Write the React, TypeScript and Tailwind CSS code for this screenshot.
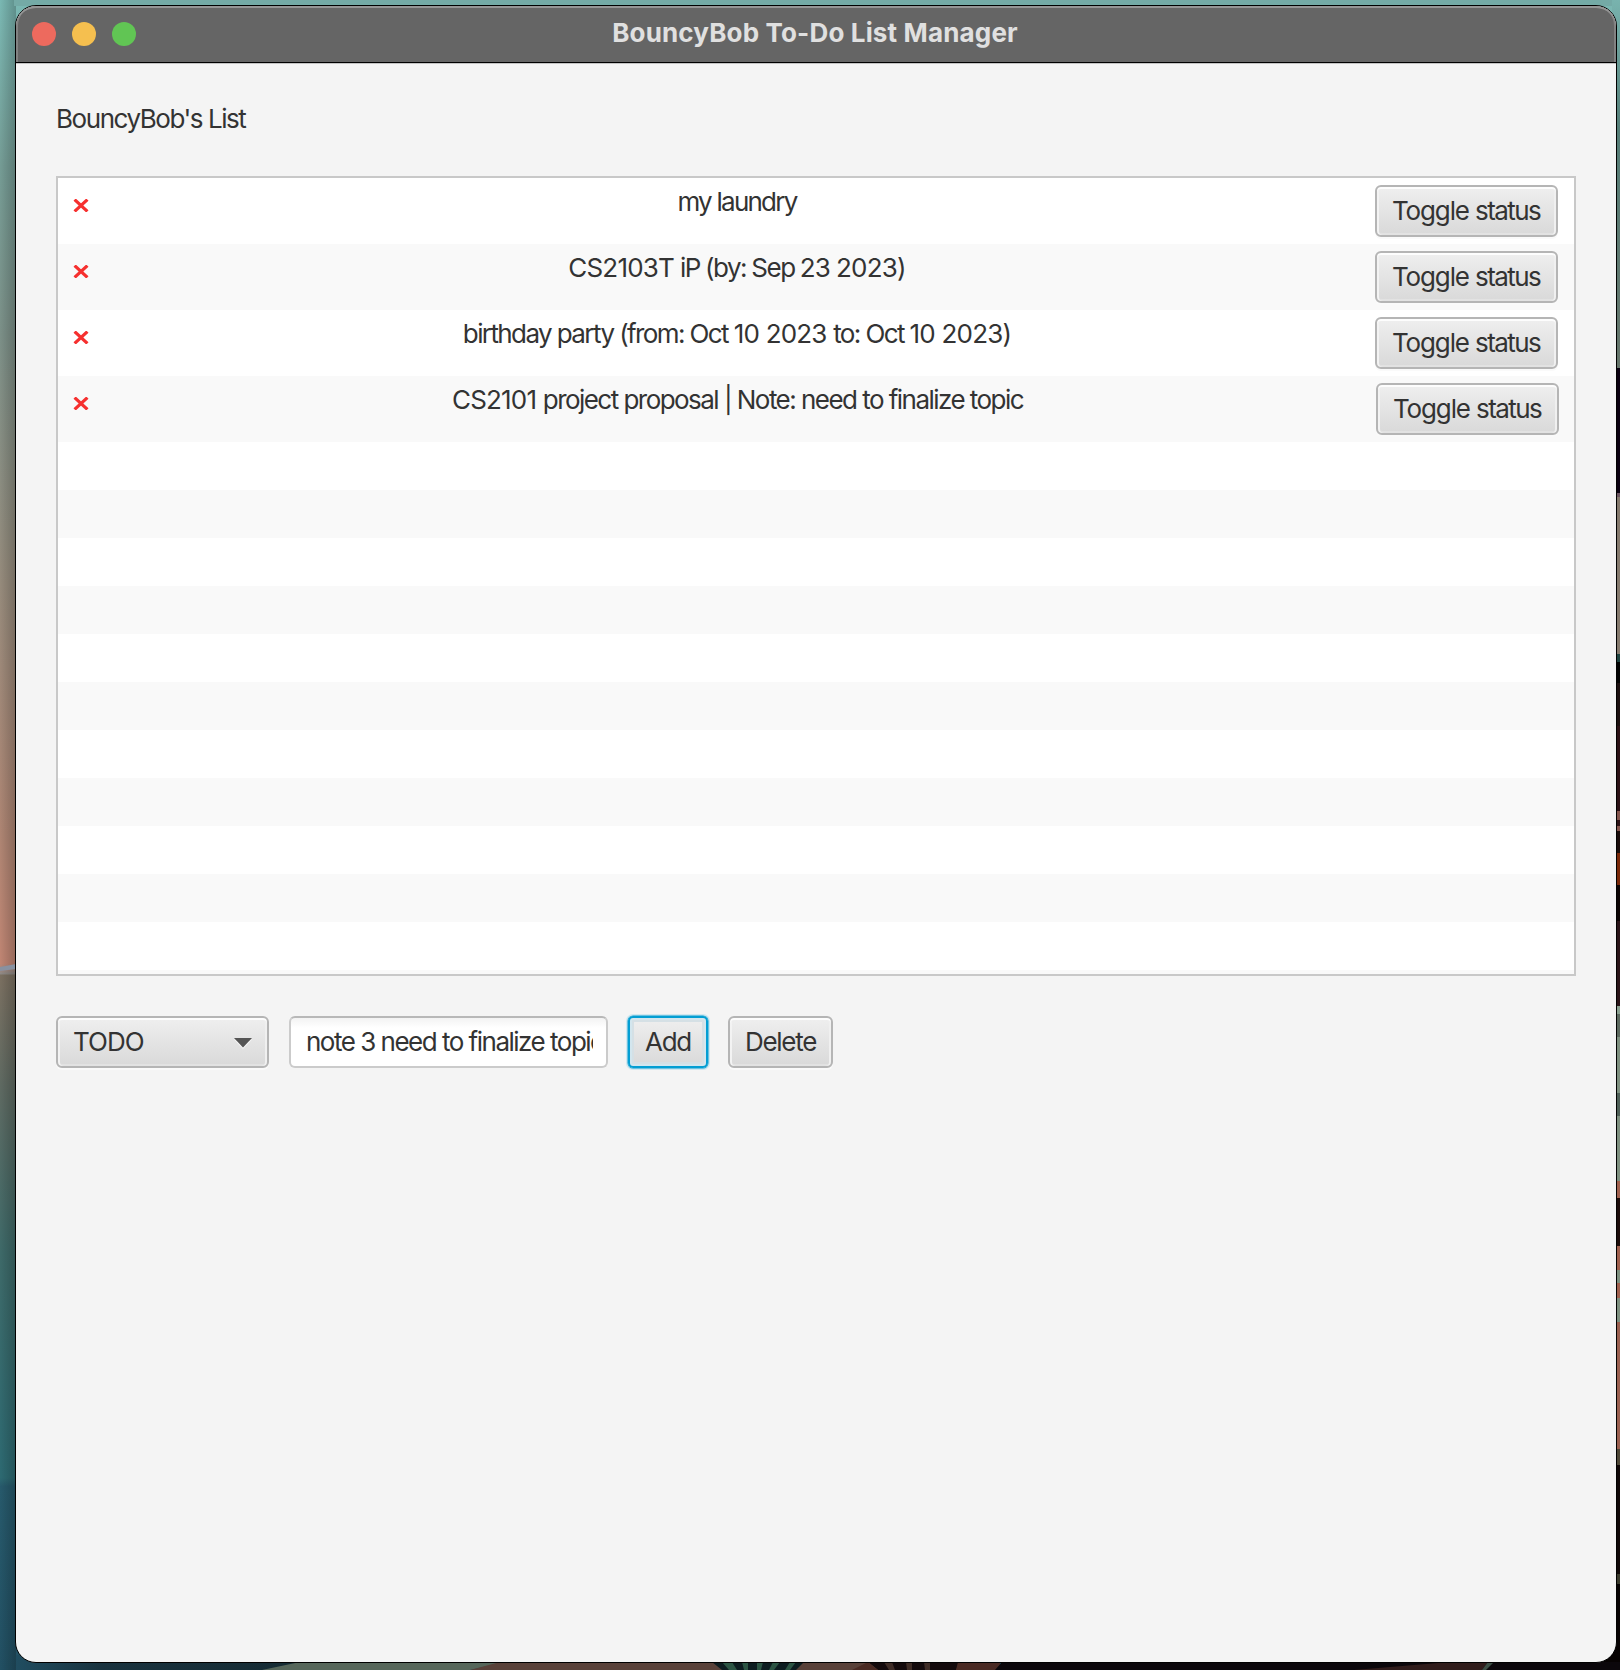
import React from "react";

type Word = { t: string; wide?: boolean };

const tasks: { words: Word[]; shift: string; gap: string; tight: string }[] = [
  {
    words: [{ t: "my" }, { t: "laundry" }],
    shift: "mr-[16px]",
    gap: "[word-spacing:0px]",
    tight: "tracking-[-1.75px]",
  },
  {
    words: [
      { t: "CS2103T", wide: true },
      { t: "iP" },
      { t: "(by:" },
      { t: "Sep" },
      { t: "23", wide: true },
      { t: "2023)", wide: true },
    ],
    shift: "mr-[16px]",
    gap: "[word-spacing:-0.6px]",
    tight: "tracking-[-1.5px]",
  },
  {
    words: [
      { t: "birthday" },
      { t: "party" },
      { t: "(from:" },
      { t: "Oct" },
      { t: "10", wide: true },
      { t: "2023", wide: true },
      { t: "to:" },
      { t: "Oct" },
      { t: "10", wide: true },
      { t: "2023)", wide: true },
    ],
    shift: "mr-[16px]",
    gap: "[word-spacing:0px]",
    tight: "tracking-[-1.6px]",
  },
  {
    words: [
      { t: "CS2101", wide: true },
      { t: "project" },
      { t: "proposal" },
      { t: "|" },
      { t: "Note:" },
      { t: "need" },
      { t: "to" },
      { t: "finalize" },
      { t: "topic" },
    ],
    shift: "mr-[15px]",
    gap: "[word-spacing:0px]",
    tight: "tracking-[-1.54px]",
  },
];

const emptyRows = Array.from({ length: 11 }, (_, i) => i);

const face =
  "h-[52px] rounded-[6px] border-2 border-[#b5b5b5] bg-linear-to-b from-[#efefef] to-[#d9d9d9] shadow-[inset_0_2px_0_#fdfdfd,inset_2px_0_0_#f3f3f3,inset_-2px_0_0_#f0f0f0,inset_0_-2px_0_#e2e2e2,0_2px_0_#fafafa] flex items-center whitespace-nowrap";

function Line({ words, tight }: { words: Word[]; tight: string }) {
  return (
    <>
      {words.map((w, i) => (
        <span key={i} className={w.wide ? "tracking-[-0.8px]" : tight}>
          {w.t}
          {i < words.length - 1 ? " " : ""}
        </span>
      ))}
    </>
  );
}

function Cross() {
  return (
    <svg viewBox="0 0 16 13" className="mt-[21px] ml-[15px] h-[13px] w-[16px] shrink-0">
      <path d="M1.6 0.6 14.4 12.4M14.4 0.6 1.6 12.4" stroke="#f6302f" strokeWidth="3.2" fill="none" />
    </svg>
  );
}

const rightBands: [number, number, string][] = [
  [368, 493, "#0a0010"],
  [493, 497, "#6b5560"],
  [497, 654, "#857a6e"],
  [654, 662, "#1f4340"],
  [662, 683, "#020202"],
  [683, 726, "#1c1010"],
  [726, 811, "#2c1216"],
  [811, 820, "#85564e"],
  [820, 826, "#2c1216"],
  [826, 831, "#85564e"],
  [831, 853, "#1a0c0a"],
  [853, 885, "#7a2808"],
  [885, 921, "#0c0403"],
  [921, 1006, "#2a1418"],
  [1006, 1014, "#8aa090"],
  [1014, 1037, "#5d6a60"],
  [1037, 1093, "#7e9080"],
  [1093, 1116, "#4f6058"],
  [1116, 1181, "#7e9080"],
  [1181, 1198, "#a0614f"],
  [1198, 1246, "#1c0c0a"],
  [1246, 1270, "#a0614f"],
  [1270, 1283, "#7e9080"],
  [1283, 1298, "#a0614f"],
  [1298, 1322, "#7e9080"],
  [1322, 1449, "#9a6050"],
  [1449, 1465, "#4f4838"],
  [1465, 1574, "#100808"],
  [1574, 1584, "#3a3a2c"],
  [1584, 1670, "#060202"],
];

function Wallpaper() {
  return (
    <svg viewBox="0 0 1620 1670" className="absolute inset-0 h-[1670px] w-[1620px]">
      <defs>
        <linearGradient id="dusk" x1="0" y1="0" x2="0" y2="1">
          <stop offset="0" stopColor="#7ab8b3" />
          <stop offset="0.1" stopColor="#759c95" />
          <stop offset="0.2" stopColor="#7c9088" />
          <stop offset="0.35" stopColor="#968b7c" />
          <stop offset="0.5" stopColor="#ae8573" />
          <stop offset="0.577" stopColor="#c08573" />
          <stop offset="0.583" stopColor="#8f8a86" />
          <stop offset="0.584" stopColor="#7b7061" />
          <stop offset="0.65" stopColor="#5f6a62" />
          <stop offset="0.75" stopColor="#3e6a69" />
          <stop offset="0.885" stopColor="#2d6a72" />
          <stop offset="0.89" stopColor="#275a6c" />
          <stop offset="1" stopColor="#225063" />
        </linearGradient>
        <linearGradient id="shade" x1="0" y1="0" x2="1" y2="0">
          <stop offset="0" stopColor="#000" stopOpacity="0" />
          <stop offset="1" stopColor="#000" stopOpacity="0.22" />
        </linearGradient>
        <linearGradient id="rightSky" x1="0" y1="0" x2="0" y2="1">
          <stop offset="0" stopColor="#78b3ae" />
          <stop offset="0.35" stopColor="#557e78" />
          <stop offset="1" stopColor="#66756b" />
        </linearGradient>
        <linearGradient id="sea" x1="0" y1="0" x2="1" y2="0">
          <stop offset="0" stopColor="#204d60" />
          <stop offset="0.3" stopColor="#19323e" />
          <stop offset="1" stopColor="#162b33" />
        </linearGradient>
      </defs>
      <rect width="1620" height="1670" fill="url(#dusk)" />
      <rect width="16" height="1670" fill="url(#shade)" />
      <path d="M0 967 16 964V969L0 971Z" fill="#8891a0" />
      <rect x="14" width="1606" height="6" fill="#74aaa6" />
      <rect x="1612" width="8" height="368" fill="url(#rightSky)" />
      {rightBands.map(([from, to, fill]) => (
        <rect key={from} x="1600" y={from} width="20" height={to - from} fill={fill} />
      ))}
      <rect y="1655" x="16" width="288" height="15" fill="url(#sea)" />
      <path d="M262 1670 300 1662H505L470 1670Z" fill="#56665a" />
      <path d="M470 1670 500 1662H1000V1670Z" fill="#594139" />
      <path d="M712 1662H804L796 1670H722Z" fill="#0d1c20" />
      <path d="M722 1662h10l5 8h-8ZM742 1662h6v8h-4ZM757 1662h6l-2 8h-4ZM773 1662h7l-6 8h-5ZM790 1662h6l-6 8h-5Z" fill="#2c5443" />
      <path d="M868 1662H960L956 1670H878Z" fill="#130a0c" />
      <path d="M884 1662h8l3 8h-6ZM906 1662h6v8h-5ZM924 1662h6v8h-5Z" fill="#3e2c26" />
      <path d="M852 1670 868 1662 878 1670ZM958 1662H1000V1670H956Z" fill="#4a2a23" />
      <path d="M995 1670 1002 1662H1620V1670Z" fill="#0b070b" />
      <path d="M1354 1670 1450 1662H1488L1482 1670Z" fill="#301c1b" />
      <path d="M1482 1670 1488 1662H1494L1486 1670Z" fill="#3d5046" />
    </svg>
  );
}

export default function App() {
  return (
    <div className="relative h-[1670px] w-[1620px] overflow-hidden bg-[#0b070b] pt-[5px] pl-[15px] font-[Inter,sans-serif] text-[26px] leading-[32px] text-[#333333]">
      <Wallpaper />
      <div className="relative flex h-[1658px] w-[1602px] flex-col overflow-hidden rounded-[21px] border border-black bg-[#f4f4f4]">
        <header className="relative flex h-[57px] shrink-0 justify-center rounded-t-[20px] border-b border-black bg-[#656565] pt-[11px] pr-[2px] shadow-[inset_0_2px_0_#959595,inset_2px_0_0_#828282,inset_-2px_0_0_#828282,0_1px_0_#c4c4c4]">
          <div className="absolute top-[16px] left-[16px] flex gap-4">
            <i className="size-6 rounded-full bg-[#ed6a5e]" />
            <i className="size-6 rounded-full bg-[#f5bf4f]" />
            <i className="size-6 rounded-full bg-[#61c554]" />
          </div>
          <span className="font-bold tracking-[0.16px] text-[#e0e0e0]">BouncyBob To-Do List Manager</span>
        </header>
        <main className="flex flex-col px-[40px] pt-[40px]">
          <h1 className="h-[73px] tracking-[-1.45px]">BouncyBob's List</h1>
          <ul className="h-[800px] overflow-hidden border-2 border-[#c8c8c8] bg-[#f9f9f9]">
            {tasks.map((t, i) => (
              <li key={i} className="flex h-[66px] odd:bg-white">
                <Cross />
                <span className={"flex-1 pt-[8px] pl-[10px] text-center " + t.gap}>
                  <Line words={t.words} tight={t.tight} />
                </span>
                <button className={"mt-[7px] w-[183px] pl-[15px] " + face + " " + t.shift}>
                  <span className="tracking-[-1.15px]">Toggle&nbsp;</span>
                  <span className="tracking-[-1.55px]">status</span>
                </button>
              </li>
            ))}
            {emptyRows.map((i) => (
              <li key={"empty" + i} className="h-[48px] odd:bg-white" />
            ))}
          </ul>
          <div className="mt-[40px] flex">
            <button className={"w-[213px] justify-between pr-[15px] pl-[15px] " + face}>
              <span className="tracking-[-1px]">TODO</span>
              <svg viewBox="0 0 18 11" className="mt-[2px] h-[11px] w-[18px]">
                <path d="M0 1.5H18L9 11Z" fill="#f7f7f7" />
                <path d="M0 0H18L9 9.4Z" fill="#555555" />
              </svg>
            </button>
            <div className="ml-[20px] flex h-[52px] w-[319px] items-center rounded-[6px] border-2 border-[#cbcbcb] border-t-[#b8b8b8] bg-white bg-linear-to-b from-[#f3f3f3] to-white to-[10px] pl-[15px]">
              <span className="w-[287px] overflow-hidden whitespace-nowrap tracking-[-1.5px]">note 3 need to finalize topic</span>
            </div>
            <button className="ml-[20px] flex h-[52px] w-[80px] items-center justify-center rounded-[5px] border-2 border-[#039ed3] bg-linear-to-b from-[#efefef] to-[#d9d9d9] tracking-[-1.2px] shadow-[inset_0_0_0_2px_#d3e6ee,inset_0_0_0_4px_#d5e0e5,0_0_0_0.5px_#039ed3,0_0_0_2px_#d0e7ef]">
              Add
            </button>
            <button className={"ml-[20px] w-[105px] justify-center tracking-[-1.3px] " + face}>Delete</button>
          </div>
        </main>
      </div>
    </div>
  );
}
